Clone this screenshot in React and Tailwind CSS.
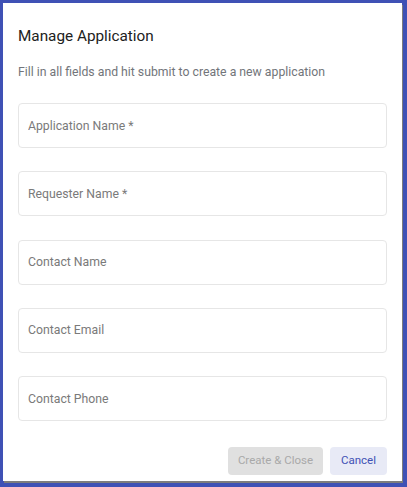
const fields = [
  "Application Name *",
  "Requester Name *",
  "Contact Name",
  "Contact Email",
  "Contact Phone",
];

export default function App() {
  return (
    <div
      className="w-[407px] h-[487px] bg-[#3f51b5] pt-[3px] pl-[3px]"
      style={{ fontFamily: "Roboto, 'Liberation Sans', sans-serif" }}
    >
      <div className="w-[399px] h-[478px] bg-white shadow-[1px_2px_0_#7d7d7d] px-[15px] flex flex-col">
        <h2 className="mt-[23px] h-[20px] leading-[20px] text-[15.3px] text-[#212121]">
          Manage Application
        </h2>
        <p className="mt-[18px] h-[16px] leading-[16px] text-[12.25px] text-[#72757a]">
          Fill in all fields and hit submit to create a new application
        </p>
        <div className="mt-[23px] flex flex-col gap-[23.25px]">
          {fields.map((f) => (
            <input
              key={f}
              placeholder={f}
              className="h-[45px] w-full rounded-[4px] border border-[#e6e6e6] px-[9px] text-[12.25px] text-[#212121] placeholder:text-[#7a7a7a] outline-none"
            />
          ))}
        </div>
        <div className="mt-[26px] flex justify-end gap-[7px]">
          <button
            disabled
            className="h-[28px] w-[95px] rounded-[4px] bg-[#e0e0e0] text-[11.5px] text-[#a9a9a9]"
          >
            Create &amp; Close
          </button>
          <button className="h-[28px] w-[57px] rounded-[4px] bg-[#e8eaf6] text-[11.5px] text-[#3f51b5]">
            Cancel
          </button>
        </div>
      </div>
    </div>
  );
}
